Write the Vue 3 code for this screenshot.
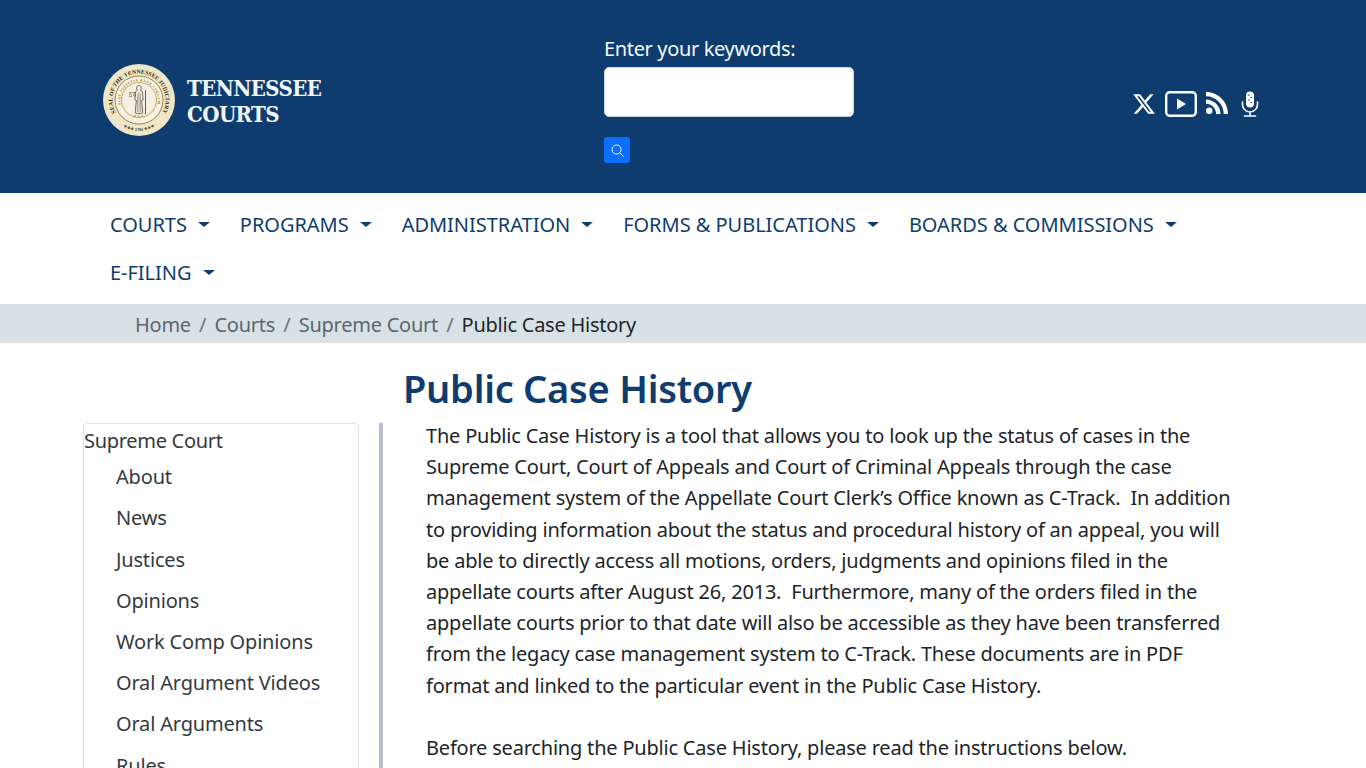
<template>
  <div class="page">
    <header class="top">
      <a class="logo">
        <svg class="seal" viewBox="0 0 72 72" width="72" height="72" aria-hidden="true">
          <circle cx="36" cy="36" r="36" fill="#efe6c8" />
          <circle cx="36" cy="36" r="24" fill="#f7f2df" stroke="#8a7440" stroke-width="0.9" />
          <circle cx="36" cy="36" r="17.500" fill="#f4f1e4" stroke="#c49a45" stroke-width="0.9" />
          <defs>
            <path id="outer" d="M15.700 53 A26.500 26.500 0 1 1 56.300 53" />
            <path id="bottom" d="M14.100 57.900 A31 31 0 0 0 57.900 57.900" />
            <path id="inner" d="M23.900 50.400 A18.800 18.800 0 1 1 48.100 50.400" />
          </defs>
          <text class="seal-t"><textPath href="#outer" startOffset="50%" text-anchor="middle">SEAL OF THE TENNESSEE JUDICIARY</textPath></text>
          <text class="seal-b"><textPath href="#bottom" startOffset="50%" text-anchor="middle">❖❖❖ 1794 ❖❖❖</textPath></text>
          <text class="seal-i"><textPath href="#inner" startOffset="50%" text-anchor="middle">FIAT JUSTITIA RUAT COELUM</textPath></text>
          <path d="M36 21.500c1.500 0 2.400 1.200 2.400 2.600 0 1-.4 1.700-.9 2.200l2 1.500.6 8-1.500.6 1.200 12.400c-2.400 1.300-5.200 1.300-7.600 0l1.200-12.400-1.500-.6.600-8 2-1.500c-.5-.5-.9-1.200-.9-2.200 0-1.400.9-2.600 2.400-2.600z" fill="#f2efe2" stroke="#4d4a3c" stroke-width="0.8" />
          <path d="M34.700 30l-.4 18M37.300 30l.4 18M36 28v21" stroke="#77735f" stroke-width=".6" fill="none" />
          <path d="M26 28.500h7M27.500 28.500l-1.500 4h3zM31.500 28.500l-1.200 3.500h2.400z" stroke="#5b5a40" stroke-width=".5" fill="none" />
          <path d="M42.500 26v24" stroke="#5b4a2a" stroke-width=".9" />
          <path d="M31 52h10" stroke="#b08a3c" stroke-width="1" stroke-dasharray="2 1.500" />
        </svg>
        <span class="logo-text">TENNESSEE<br />COURTS</span>
      </a>
      <form class="search" @submit.prevent>
        <label class="search-label" for="kw">Enter your keywords:</label>
        <input id="kw" class="search-input" type="text" />
        <button class="search-btn" type="submit" aria-label="Search">
          <svg viewBox="0 0 16 16" width="13" height="13" fill="none" stroke="#fff" stroke-width="1.200">
            <circle cx="6.800" cy="6.800" r="5.600" />
            <path d="M11 11l4 4" stroke-linecap="round" />
          </svg>
        </button>
      </form>
      <div class="social">
        <svg class="ic-x" viewBox="0 0 24 24" width="24" height="24" fill="#fff"><path d="M18.244 2.250h3.308l-7.227 8.260 8.502 11.240H16.170l-5.214-6.817L4.990 21.750H1.680l7.730-8.835L1.254 2.250H8.080l4.713 6.231zm-1.161 17.520h1.833L7.084 4.126H5.117z" /></svg>
        <svg class="ic-yt" viewBox="0 0 32 26" width="32" height="26"><rect x="1.200" y="1.200" width="29.600" height="23.600" rx="3.500" fill="none" stroke="#fff" stroke-width="2.400" /><path d="M12 7.500l9 5.500-9 5.500z" fill="#fff" /></svg>
        <svg class="ic-rss" viewBox="0 0 24 24" width="24" height="24" fill="#fff"><circle cx="4.200" cy="19.800" r="3.200" /><path d="M1 8.500v4.300c5.700 0 10.200 4.500 10.200 10.200h4.300C15.500 15 9 8.500 1 8.500z" /><path d="M1 1v4.300c9.800 0 17.700 7.900 17.700 17.700H23C23 10.900 13.100 1 1 1z" /></svg>
        <svg class="ic-mic" viewBox="0 0 18 26" width="18" height="26"><rect x="5" y="0.500" width="8" height="16" rx="4" fill="#fff" /><path d="M1.500 11v2.500a7.500 7.500 0 0 0 15 0V11M9 21v3M3.500 25h11" stroke="#fff" stroke-width="1.600" fill="none" stroke-linecap="round" /><path d="M7 4h1.500M9.500 6.500H11M7 9h1.500M9.500 11.500H11" stroke="#0e3c6e" stroke-width="1.200" /></svg>
      </div>
    </header>

    <nav class="nav">
      <a v-for="item in navItems" :key="item" class="nav-link">{{ item }}<span class="caret"></span></a>
    </nav>

    <ol class="crumbs">
      <li v-for="c in crumbs" :key="c" class="crumb">{{ c }}<span class="sep">/</span></li>
      <li class="crumb current">Public Case History</li>
    </ol>

    <main class="main">
      <h1 class="title">Public Case History</h1>
      <div class="cols">
        <aside class="side">
          <div class="side-head">Supreme Court</div>
          <a v-for="s in sideItems" :key="s" class="side-link">{{ s }}</a>
        </aside>
        <div class="divider"></div>
        <article class="body">
          <p class="para">The Public Case History is a tool that allows you to look up the status of cases in the Supreme Court, Court of Appeals and Court of Criminal Appeals through the case management system of the Appellate Court Clerk’s Office known as C-Track.&nbsp; In addition to providing information about the status and procedural history of an appeal, you will be able to directly access all motions, orders, judgments and opinions filed in the appellate courts after August 26, 2013.&nbsp; Furthermore, many of the orders filed in the appellate courts prior to that date will also be accessible as they have been transferred from the legacy case management system to C-Track. These documents are in PDF format and linked to the particular event in the Public Case History.</p>
          <p class="para">Before searching the Public Case History, please read the instructions below.</p>
        </article>
      </div>
    </main>
  </div>
</template>

<script setup>
const navItems = ['COURTS', 'PROGRAMS', 'ADMINISTRATION', 'FORMS & PUBLICATIONS', 'BOARDS & COMMISSIONS', 'E-FILING']
const crumbs = ['Home', 'Courts', 'Supreme Court']
const sideItems = ['About', 'News', 'Justices', 'Opinions', 'Work Comp Opinions', 'Oral Argument Videos', 'Oral Arguments', 'Rules']
</script>

<style>
html, body { margin: 0; overflow: hidden; background: #fff; }
</style>

<style scoped>
.page {
  height: 768px;
  overflow: hidden;
  font-family: "Noto Sans", sans-serif;
  font-size: 20px;
  color: #212529;
}
.top {
  height: 193px;
  box-sizing: border-box;
  background: #0e3c6e;
  display: flex;
  align-items: flex-start;
  padding: 36px 107px 0 103px;
  color: #fff;
}
.logo { display: flex; align-items: center; gap: 12px; width: 501px; margin-top: 28px; }
.seal { flex: none; }
.seal-t { font: 700 5.800px "Liberation Serif", serif; fill: #33270f; letter-spacing: .05px; }
.seal-b { font: 700 4.200px "Liberation Serif", "DejaVu Sans", serif; fill: #3d2f1a; }
.seal-i { font: 700 3.200px "Liberation Serif", serif; fill: #7a5a20; letter-spacing: .8px; }
.logo-text {
  font-family: "DejaVu Serif", serif;
  font-stretch: condensed;
  font-weight: 700;
  font-size: 22px;
  line-height: 26px;
  letter-spacing: -0.55px;
  padding-top: 2px;
  color: #f2f7fb;
}
.search { display: flex; flex-direction: column; align-items: flex-start; width: 250px; }
.search-label { line-height: 26px; margin-bottom: 5px; color: #f4f9fd; letter-spacing: -0.35px; }
.search-input {
  width: 250px; height: 50px; box-sizing: border-box;
  border: 1px solid #ced4da; border-radius: 5px; background: #fff;
  margin-bottom: 20px; padding: 0;
}
.search-btn {
  width: 26px; height: 26px; padding: 0; border: 0; border-radius: 3px;
  background: #0d6efd; display: flex; align-items: center; justify-content: center;
}
.social { margin-left: auto; display: flex; align-items: center; gap: 9px; margin-top: 55px; }
.ic-rss { margin: -2px 0 0 -1px; }
.ic-mic { margin-left: 3px; }
.nav {
  height: 111px;
  box-sizing: border-box;
  padding: 7px 60px 0 95px;
  display: flex;
  flex-wrap: wrap;
  align-content: flex-start;
  letter-spacing: -0.03px;
}
.nav-link {
  display: flex; align-items: center;
  height: 48px; padding: 0 15px;
  color: #0e3c6e;
  white-space: nowrap;
}
.caret {
  width: 0; height: 0; margin-left: 11px;
  border-top: 5px solid #0e3c6e;
  border-left: 6px solid transparent;
  border-right: 6px solid transparent;
}
.crumbs {
  list-style: none; margin: 0; height: 39px; box-sizing: border-box;
  padding: 1px 0 0 135px;
  display: flex; align-items: center;
  background: #d8e2e5;
  letter-spacing: -0.25px;
}
.crumb { color: #5b6670; }
.crumb.current { color: #212529; }
.sep { padding: 0 8.200px; color: #6c757d; }
.main { padding: 21px 0 0 83px; }
.title {
  margin: 0 0 8px 320px;
  font-size: 38px; line-height: 48px; font-weight: 600; color: #0e3c6e;
  letter-spacing: -0.25px;
}
.cols { display: flex; align-items: flex-start; }
.side {
  width: 276px; box-sizing: border-box; flex: none;
  border: 1px solid #dee2e6; border-radius: 4px;
  height: 400px; margin-top: 3px;
  color: #343a40;
  letter-spacing: -0.18px;
}
.side-head { line-height: 34px; margin-bottom: -1.900px; letter-spacing: -0.3px; }
.side-link { display: block; padding-left: 32px; line-height: 41.200px; }
.divider { width: 4px; background: #b9bccf; margin: 3px 0 0 20px; flex: none; height: 400px; }
.body { margin-left: 43px; width: 810px; letter-spacing: -0.2px; }
.para { margin: 0 0 31.200px; line-height: 31.180px; }
</style>
